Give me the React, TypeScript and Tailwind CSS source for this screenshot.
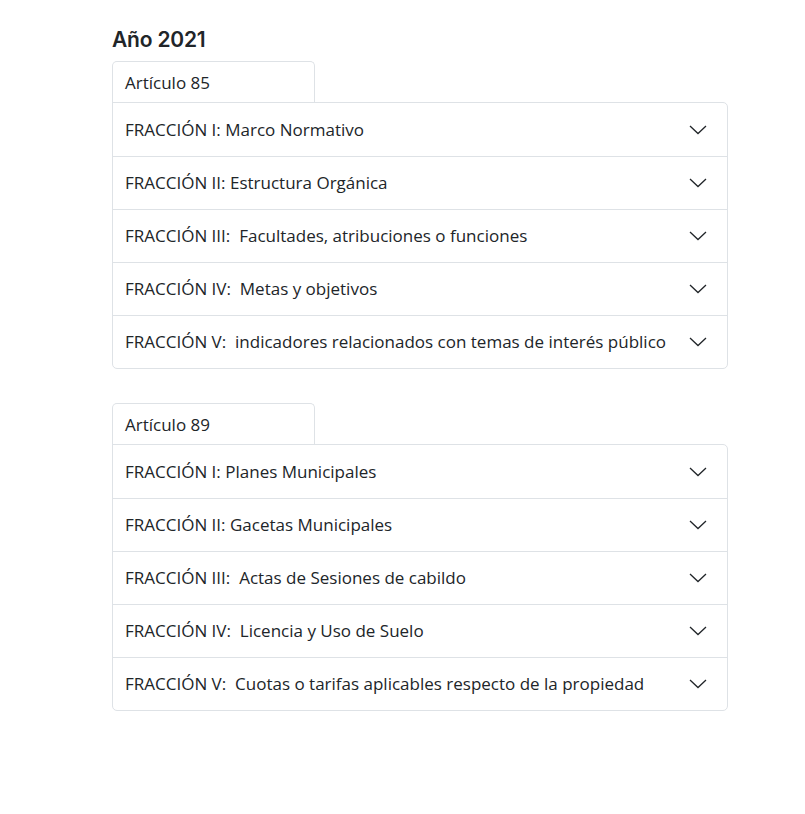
import React from 'react';

const groups = [
  {
    title: 'Artículo 85',
    items: [
      'FRACCIÓN I: Marco Normativo',
      'FRACCIÓN II: Estructura Orgánica',
      'FRACCIÓN III:  Facultades, atribuciones o funciones',
      'FRACCIÓN IV:  Metas y objetivos',
      'FRACCIÓN V:  indicadores relacionados con temas de interés público',
    ],
  },
  {
    title: 'Artículo 89',
    items: [
      'FRACCIÓN I: Planes Municipales',
      'FRACCIÓN II: Gacetas Municipales',
      'FRACCIÓN III:  Actas de Sesiones de cabildo',
      'FRACCIÓN IV:  Licencia y Uso de Suelo',
      'FRACCIÓN V:  Cuotas o tarifas aplicables respecto de la propiedad',
    ],
  },
];

function Chevron() {
  return (
    <svg className="h-[10px] w-[18px] text-[#212529]" viewBox="0 0 18 10" fill="none" stroke="currentColor" strokeWidth={1.3}>
      <polyline points="1,1 9,8.5 17,1" />
    </svg>
  );
}

export default function App() {
  return (
    <div className="min-h-[814px] bg-white font-['Open_Sans',sans-serif] text-[#212529]">
      <div className="ml-[112px] w-[616px] pt-[26px]">
        <h2 className="font-['Inter',sans-serif] text-[21px] font-semibold leading-[28px] tracking-[-0.2px]">
          Año 2021
        </h2>
        {groups.map((g, gi) => (
          <div key={g.title} className={gi === 0 ? 'mt-[7px]' : 'mt-[34px]'}>
            <div className="-mb-px h-[42px] w-[203px] rounded-t-[5px] border border-b-0 border-[#dee2e6] px-[12px] pt-[10px] text-[17px] leading-[22px]">
              {g.title}
            </div>
            <div className="rounded-b-[5px] rounded-tr-[5px] border border-[#dee2e6]">
              {g.items.map((item, i) => (
                <div
                  key={item}
                  className={`flex h-[53px] items-center justify-between pl-[12px] pr-[20px] text-[17px] ${
                    i > 0 ? 'border-t border-[#dee2e6]' : ''
                  }`}
                >
                  <span className="whitespace-pre">{item}</span>
                  <Chevron />
                </div>
              ))}
            </div>
          </div>
        ))}
      </div>
    </div>
  );
}
